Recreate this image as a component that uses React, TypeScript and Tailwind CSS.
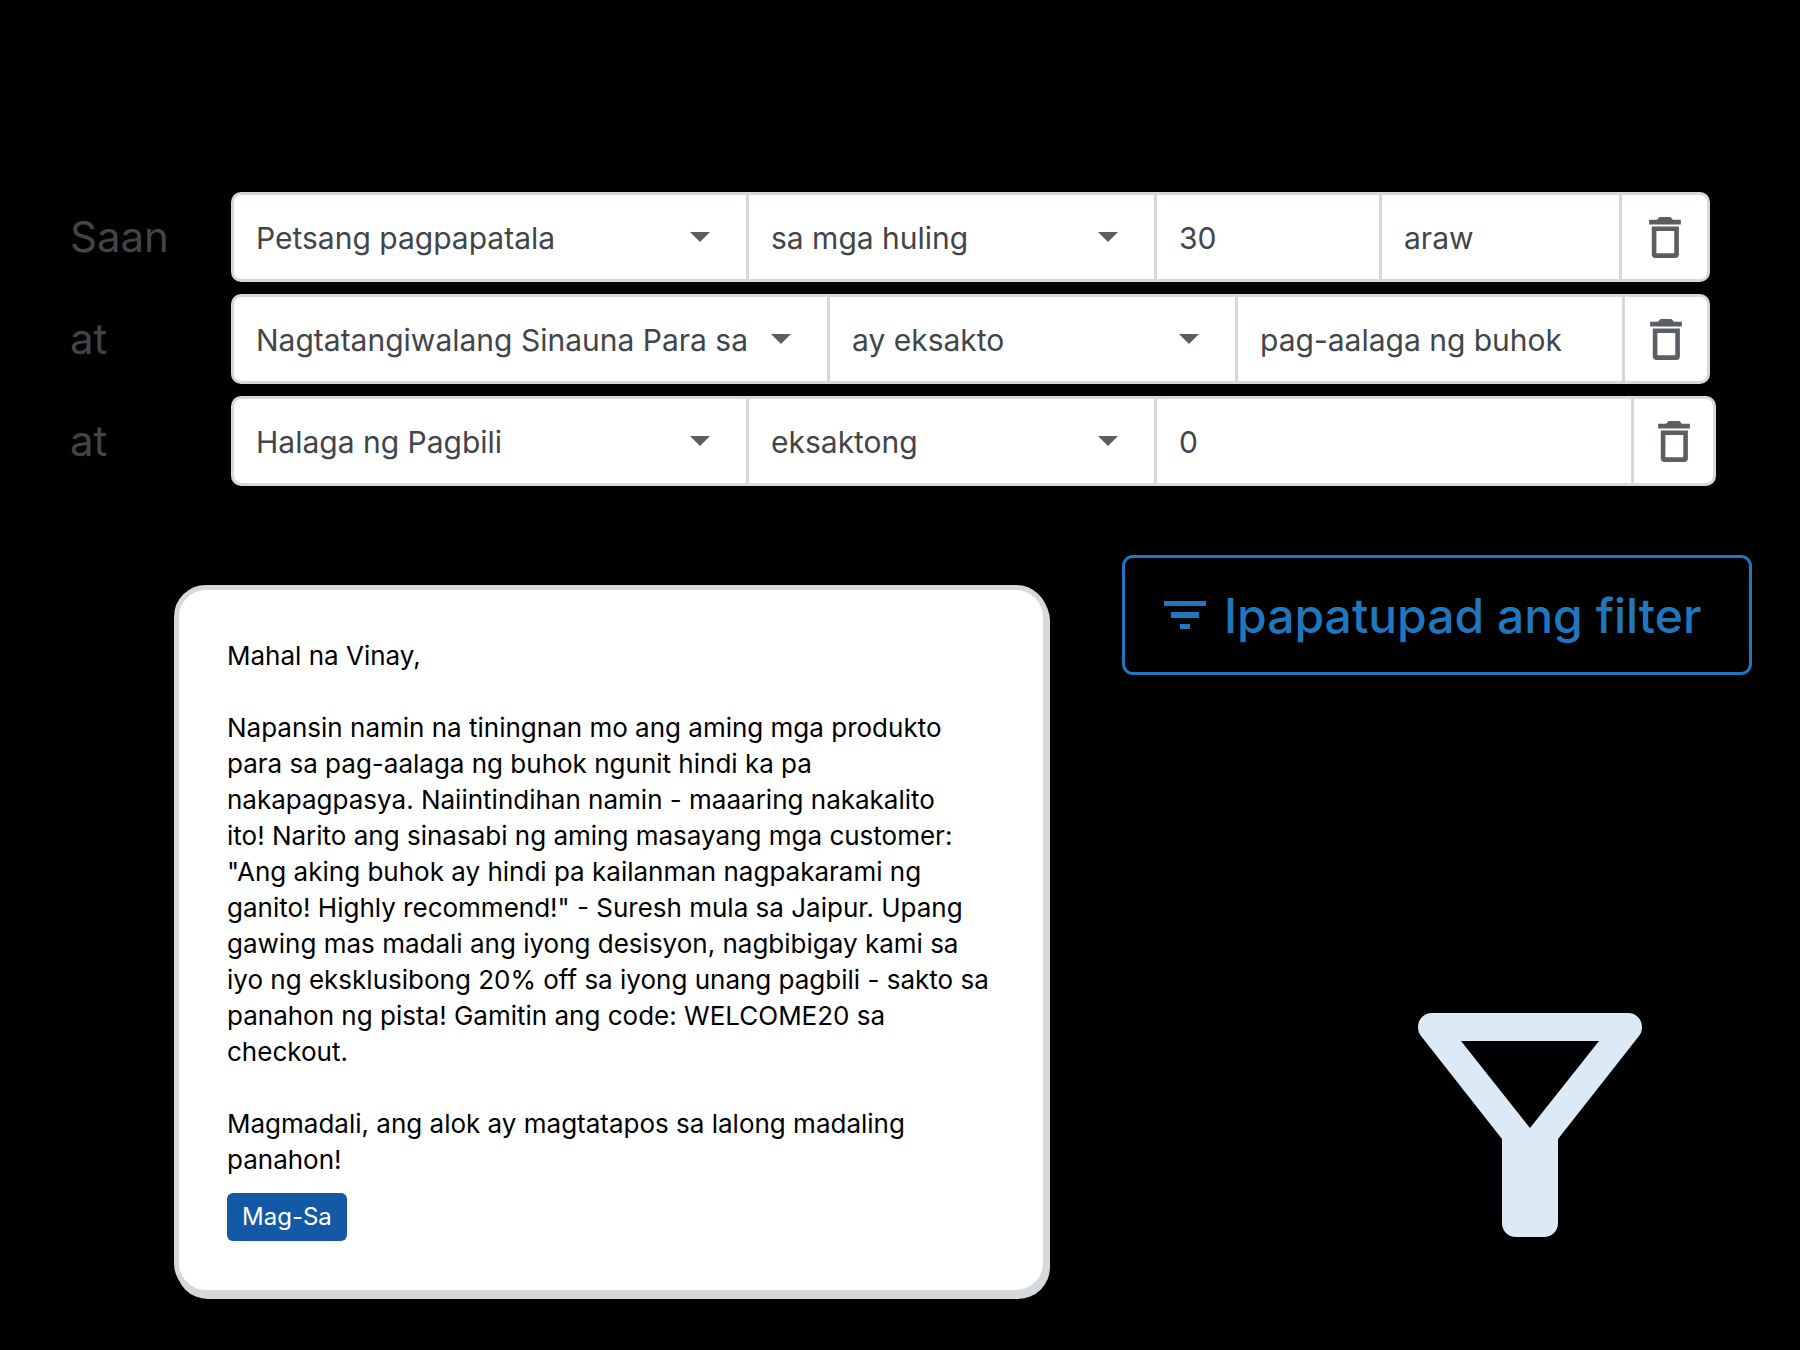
import React from "react";

type Cell = { kind: "select" | "input"; value: string; label: string };
type Row = { lead: string; columns: string; cells: Cell[] };

const rows: Row[] = [
  {
    lead: "Saan",
    columns: "grid-cols-[515fr_408fr_225fr_240fr_85fr] mr-1.5",
    cells: [
      { kind: "select", value: "Petsang pagpapatala", label: "Field" },
      { kind: "select", value: "sa mga huling", label: "Operator" },
      { kind: "input", value: "30", label: "Bilang" },
      { kind: "input", value: "araw", label: "Yunit" },
    ],
  },
  {
    lead: "at",
    columns: "grid-cols-[596fr_408fr_387fr_82fr] mr-1.5",
    cells: [
      { kind: "select", value: "Nagtatangiwalang Sinauna Para sa", label: "Field" },
      { kind: "select", value: "ay eksakto", label: "Operator" },
      { kind: "input", value: "pag-aalaga ng buhok", label: "Halaga" },
    ],
  },
  {
    lead: "at",
    columns: "grid-cols-[515fr_408fr_477fr_79fr]",
    cells: [
      { kind: "select", value: "Halaga ng Pagbili", label: "Field" },
      { kind: "select", value: "eksaktong", label: "Operator" },
      { kind: "input", value: "0", label: "Halaga" },
    ],
  },
];

const letter = [
  "Napansin namin na tiningnan mo ang aming mga produkto",
  "para sa pag-aalaga ng buhok ngunit hindi ka pa",
  "nakapagpasya. Naiintindihan namin - maaaring nakakalito",
  "ito! Narito ang sinasabi ng aming masayang mga customer:",
  "\"Ang aking buhok ay hindi pa kailanman nagpakarami ng",
  "ganito! Highly recommend!\" - Suresh mula sa Jaipur. Upang",
  "gawing mas madali ang iyong desisyon, nagbibigay kami sa",
  "iyo ng eksklusibong 20% off sa iyong unang pagbili - sakto sa",
  "panahon ng pista! Gamitin ang code: WELCOME20 sa",
  "checkout.",
];

const closing = ["Magmadali, ang alok ay magtatapos sa lalong madaling", "panahon!"];

function Lines({ lines }: { lines: string[] }) {
  return (
    <p className="whitespace-nowrap">
      {lines.map((line, i) => (
        <React.Fragment key={i}>
          {i > 0 && <br />}
          {line}
        </React.Fragment>
      ))}
    </p>
  );
}

function TrashIcon() {
  return (
    <svg viewBox="0 0 96 124" className="h-[41px] w-8" fill="#5b5f63" aria-hidden="true">
      <path d="M0 8 H23 Q26 8 28 4 Q30 0 34 0 H62 Q66 0 68 4 Q70 8 73 8 H96 V23 H0 Z" />
      <path
        fillRule="evenodd"
        d="M8 29 H90 V113 Q90 124 79 124 H19 Q8 124 8 113 Z M22 42 V110 H76 V42 Z"
      />
    </svg>
  );
}

function CellField({ cell }: { cell: Cell }) {
  if (cell.kind === "input") {
    return (
      <input
        aria-label={cell.label}
        defaultValue={cell.value}
        className="h-full w-full min-w-0 border-r-3 border-[#d5d9dc] bg-transparent pt-0.5 pl-[22px] outline-none"
      />
    );
  }
  return (
    <div className="relative h-full min-w-0 border-r-3 border-[#d5d9dc]">
      <select
        aria-label={cell.label}
        defaultValue={cell.value}
        className="h-full w-full appearance-none bg-transparent pt-0.5 pl-[22px] outline-none"
      >
        <option>{cell.value}</option>
      </select>
      <svg
        viewBox="0 0 20 10"
        className="pointer-events-none absolute top-[37px] right-9 h-2.5 w-5"
        fill="#5b5f63"
        aria-hidden="true"
      >
        <path d="M0 0 H20 L10 10 Z" />
      </svg>
    </div>
  );
}

export default function App() {
  return (
    <main className="min-h-screen bg-black pt-48 pb-12 font-['Inter',sans-serif]">
      <form className="flex flex-col gap-3 pr-[84px] pl-[70px]">
        {rows.map((row, i) => (
          <div key={i} className="flex items-center">
            <span className="w-[161px] shrink-0 pb-0.5 text-[42px] text-[#414549]">{row.lead}</span>
            <div
              className={`grid h-[90px] flex-1 overflow-hidden rounded-[10px] border-3 border-[#d5d9dc] bg-white text-[30px] text-[#414549] ${row.columns}`}
            >
              {row.cells.map((cell, j) => (
                <CellField key={j} cell={cell} />
              ))}
              <button type="button" aria-label="Burahin" className="flex items-center justify-center">
                <TrashIcon />
              </button>
            </div>
          </div>
        ))}
      </form>

      <div className="mt-[69px] flex items-start gap-[74px] pr-12 pl-[174px]">
        <article className="mt-[30px] w-[874px] shrink-0 rounded-[32px] border-5 border-[#d5d9dc] bg-white p-12 text-[26px] leading-9 text-black shadow-[2px_4px_0_#d5d9dc]">
          <div className="flex flex-col gap-9">
            <p>Mahal na Vinay,</p>
            <Lines lines={letter} />
            <Lines lines={closing} />
          </div>
          <button type="button" className="mt-[15px] mb-px flex h-12 items-center rounded-md bg-[#1459a5] px-[15px] text-2xl text-white">
            Mag-Sa
          </button>
        </article>

        <div className="flex flex-1 flex-col">
          <button
            type="button"
            className="flex h-[120px] items-center gap-[18px] rounded-[11px] border-3 border-[#2077be] px-[39px] text-5xl font-medium whitespace-nowrap text-[#2077be]"
          >
            <svg viewBox="0 0 42 28" className="h-7 w-[42px] shrink-0" fill="currentColor" aria-hidden="true">
              <path d="M0 0H42V5H0ZM7 11H35V17H7ZM16 23H26V28H16Z" />
            </svg>
            <span className="pt-0.5">Ipapatupad ang filter</span>
          </button>
          <svg
            viewBox="0 0 224 224"
            className="mt-[338px] mr-[110px] size-56 self-end"
            fill="#dceaf7"
            aria-hidden="true"
          >
            <path
              fillRule="evenodd"
              d="M14 0H210C218 0 224 6 224 14C224 17.500 223 20.500 221 23L140 126V210C140 218 134 224 126 224H98C90 224 84 218 84 210V126L3 23C1 20.500 0 17.500 0 14C0 6 6 0 14 0ZM43 28L112 115L181 28Z"
            />
          </svg>
        </div>
      </div>
    </main>
  );
}
